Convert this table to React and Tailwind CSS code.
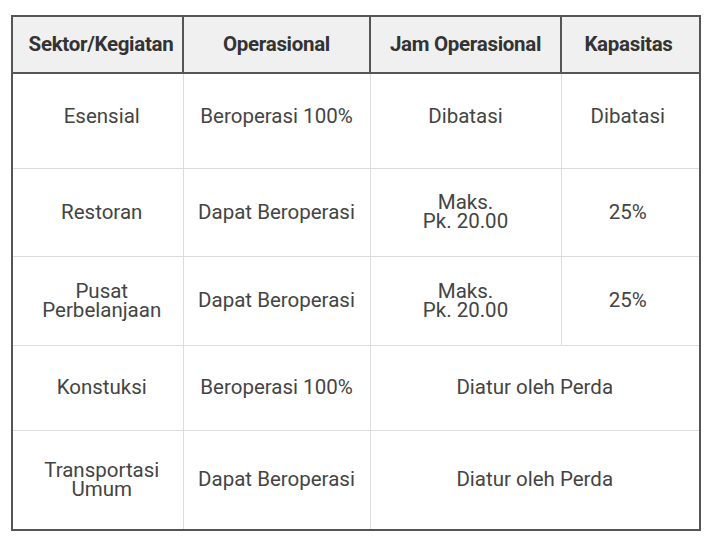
export default function App() {
  const rows = [
    { sektor: ["Esensial"], op: "Beroperasi 100%", jam: ["Dibatasi"], kap: "Dibatasi", h: "h-[95px]", pad: "pb-[8px]" },
    { sektor: ["Restoran"], op: "Dapat Beroperasi", jam: ["Maks.", "Pk. 20.00"], kap: "25%", h: "h-[88px]", pad: "" },
    { sektor: ["Pusat", "Perbelanjaan"], op: "Dapat Beroperasi", jam: ["Maks.", "Pk. 20.00"], kap: "25%", h: "h-[89px]", pad: "" },
    { sektor: ["Konstuksi"], op: "Beroperasi 100%", span: "Diatur oleh Perda", h: "h-[85px]", pad: "" },
    { sektor: ["Transportasi", "Umum"], op: "Dapat Beroperasi", span: "Diatur oleh Perda", h: "h-[100px]", pad: "" },
  ];

  const cell = "border border-[#dcdcdc] text-center align-middle px-0";

  const Lines = ({ lines }) => (
    <div className="leading-[19px]">
      {lines.map((l) => (
        <div key={l}>{l}</div>
      ))}
    </div>
  );

  const heads = [
    { t: "Sektor/Kegiatan", p: "pl-[7px]" },
    { t: "Operasional", p: "" },
    { t: "Jam Operasional", p: "" },
    { t: "Kapasitas", p: "pr-[4px]" },
  ];

  return (
    <div className="min-h-screen bg-white pt-[15px] pl-[11px] font-['Roboto',sans-serif]">
      <table className="w-[688px] table-fixed border-collapse border-2 border-[#555] text-[20.5px] text-[#444]">
        <colgroup>
          <col className="w-[171px]" />
          <col className="w-[187px]" />
          <col className="w-[191px]" />
          <col className="w-[139px]" />
        </colgroup>
        <thead>
          <tr className="h-[57px] bg-[#f0f0f0] text-[20.5px] font-bold text-[#333]">
            {heads.map((h) => (
              <th key={h.t} className={`border-2 border-[#555] text-center align-middle tracking-[-0.3px] whitespace-nowrap ${h.p}`}>
                {h.t}
              </th>
            ))}
          </tr>
        </thead>
        <tbody>
          {rows.map((r) => (
            <tr key={r.sektor.join(" ")} className={r.h}>
              <td className={`${cell} ${r.pad} pl-[8px]`}>
                <Lines lines={r.sektor} />
              </td>
              <td className={`${cell} ${r.pad} whitespace-nowrap`}>{r.op}</td>
              {r.span ? (
                <td colSpan={2} className={cell}>
                  {r.span}
                </td>
              ) : (
                <>
                  <td className={`${cell} ${r.pad}`}>
                    <Lines lines={r.jam} />
                  </td>
                  <td className={`${cell} ${r.pad} pr-[5px]`}>{r.kap}</td>
                </>
              )}
            </tr>
          ))}
        </tbody>
      </table>
    </div>
  );
}
